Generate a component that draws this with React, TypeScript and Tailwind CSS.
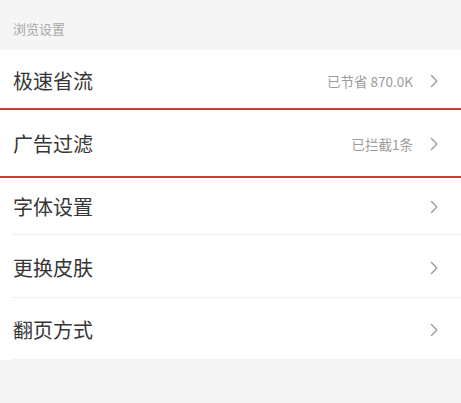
const rows = [
  { label: '极速省流', value: '已节省 870.0K', box: 'h-[60px] border-b-[2px] border-[#d23a3a] pl-[13px]', text: 'pt-[4px]' },
  { label: '广告过滤', value: '已拦截1条', box: 'h-[68px] border-b-[2px] border-[#d23a3a] pl-[13px]', text: 'pt-[2px]' },
  { label: '字体设置', value: '', box: 'ml-[12px] h-[57px] border-b border-[#efefef] pl-[1px]', text: 'pt-[1px]' },
  { label: '更换皮肤', value: '', box: 'ml-[12px] h-[63px] border-b border-[#efefef] pl-[1px]', text: 'pt-[4px]' },
  { label: '翻页方式', value: '', box: 'ml-[12px] h-[62px] border-b border-[#f2f2f2] pl-[1px]', text: 'pt-[3px]' },
];

function Chevron() {
  return (
    <svg width="10" height="16" viewBox="0 0 10 16" className="text-[#9a9a9a]">
      <path d="M2.5 2.5 L7.8 8 L2.5 13.5" fill="none" stroke="currentColor" strokeWidth="1.3" strokeLinecap="round" strokeLinejoin="round" />
    </svg>
  );
}

export default function App() {
  return (
    <div
      className="h-[403px] w-[461px] bg-[#f5f5f5]"
      style={{ fontFamily: '"Noto Sans CJK SC", "Noto Sans", sans-serif' }}
    >
      <div className="flex h-[50px] items-center px-[13px] pt-[8px] text-[13px] text-[#a8a8a8]">
        浏览设置
      </div>
      <div className="bg-white">
        {rows.map((r) => (
          <div key={r.label} className={`flex items-center pr-[22px] ${r.box}`}>
            <span className={`text-[20px] text-[#363636] ${r.text}`}>{r.label}</span>
            <span className={`ml-auto mr-[16px] text-[13.5px] text-[#9c9c9c] ${r.text}`}>{r.value}</span>
            <span className={r.text}>
              <Chevron />
            </span>
          </div>
        ))}
      </div>
    </div>
  );
}
